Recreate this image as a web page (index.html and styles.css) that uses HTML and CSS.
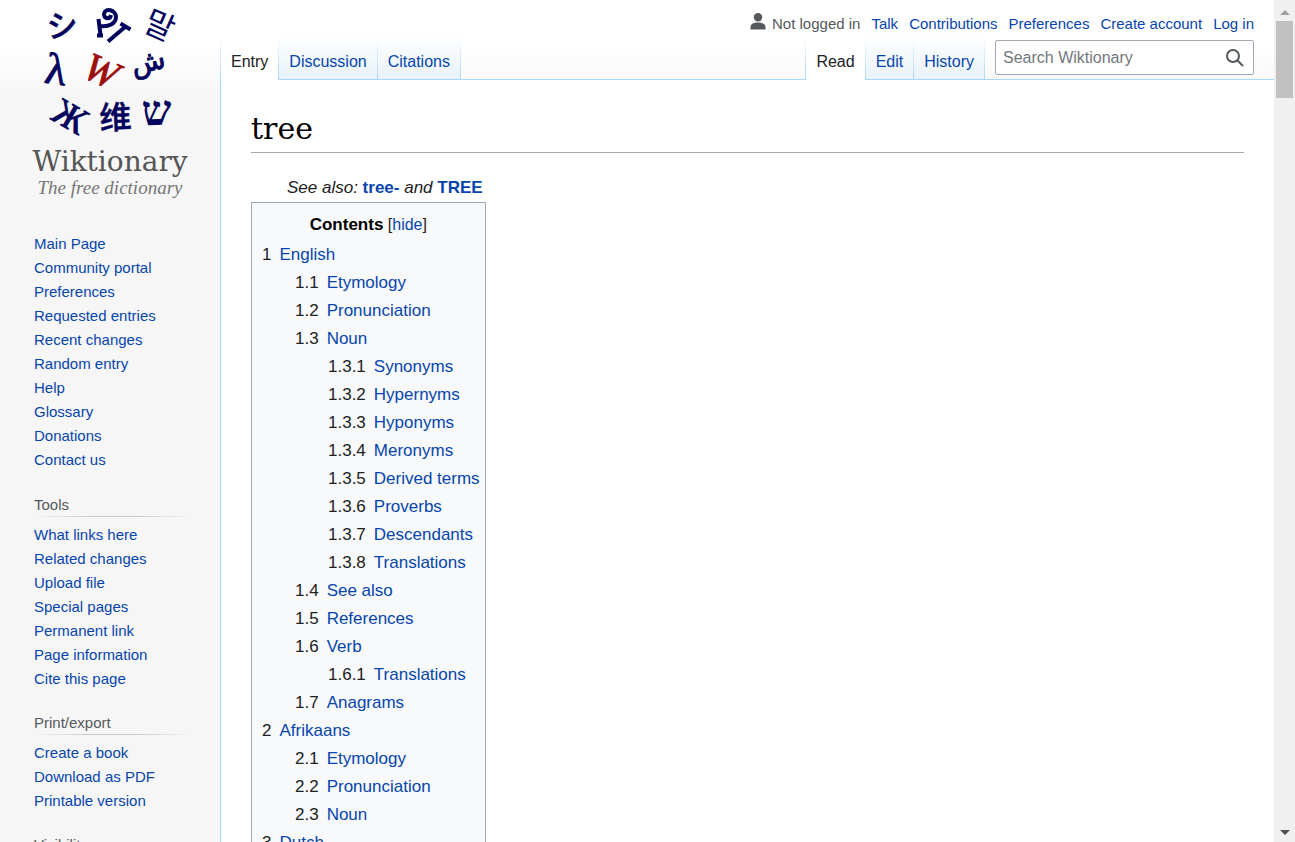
FILE: index.html
```html
<!DOCTYPE html>
<html lang="en">
<head>
<meta charset="utf-8">
<title>tree - Wiktionary</title>
<link rel="stylesheet" href="styles.css">
</head>
<body>
<div class="window">
  <div class="page">
    <aside class="sidebar">
      <a class="logo" href="#" aria-label="Wiktionary, the free dictionary">
        <svg class="logo-art" viewBox="0 0 220 144" aria-hidden="true">
          <g class="glyphs" text-anchor="middle">
            <text class="cjk medium" font-size="31" transform="translate(63 37) rotate(-4)">シ</text>
            <path class="brush" d="M98.500 19L100.500 35M97 35.500H103M100.500 26C108 27 116 24 116 17C116 10 105 7 104 14C104 19 110 20 111 15M108 41.500L125 27M120.500 23.500L130.500 29.500"/>
            <text class="cjk" font-size="32" transform="translate(155 36) rotate(24)">말</text>
            <text class="serif outlined" font-size="44" transform="translate(54 84) rotate(8)">λ</text>
            <text class="serif red" font-size="40" transform="translate(96 83) rotate(24)">W</text>
            <text class="sans outlined" font-size="28" transform="translate(150 71) rotate(-12)">ش</text>
            <text class="serif outlined" font-size="37" transform="translate(64 127) rotate(30)">Ж</text>
            <text class="cjk medium" font-size="32" transform="translate(116 129) rotate(-3)">维</text>
            <text class="serif bold" font-size="42" transform="translate(157 125) rotate(-2)">ש</text>
          </g>
        </svg>
        <span class="wordmark">Wiktionary</span>
        <span class="tagline">The free dictionary</span>
      </a>
      <nav class="portal main-links">
        <ul>
          <li><a href="#">Main Page</a></li>
          <li><a href="#">Community portal</a></li>
          <li><a href="#">Preferences</a></li>
          <li><a href="#">Requested entries</a></li>
          <li><a href="#">Recent changes</a></li>
          <li><a href="#">Random entry</a></li>
          <li><a href="#">Help</a></li>
          <li><a href="#">Glossary</a></li>
          <li><a href="#">Donations</a></li>
          <li><a href="#">Contact us</a></li>
        </ul>
      </nav>
      <nav class="portal" aria-labelledby="tools">
        <h3 id="tools">Tools</h3>
        <ul>
          <li><a href="#">What links here</a></li>
          <li><a href="#">Related changes</a></li>
          <li><a href="#">Upload file</a></li>
          <li><a href="#">Special pages</a></li>
          <li><a href="#">Permanent link</a></li>
          <li><a href="#">Page information</a></li>
          <li><a href="#">Cite this page</a></li>
        </ul>
      </nav>
      <nav class="portal" aria-labelledby="print">
        <h3 id="print">Print/export</h3>
        <ul>
          <li><a href="#">Create a book</a></li>
          <li><a href="#">Download as PDF</a></li>
          <li><a href="#">Printable version</a></li>
        </ul>
      </nav>
      <nav class="portal" aria-labelledby="visibility">
        <h3 id="visibility">Visibility</h3>
      </nav>
    </aside>

    <div class="main">
      <header class="header">
        <nav class="personal" aria-label="Personal tools">
          <span class="anon">
            <svg class="user-icon" viewBox="0 0 16 17" aria-hidden="true"><circle cx="8" cy="4.300" r="4.200"/><path d="M8 9.500C3 9.500 .5 11.500 .5 14V16.500H15.500V14C15.500 11.500 13 9.500 8 9.500Z"/></svg>
            Not logged in
          </span>
          <a href="#">Talk</a>
          <a href="#">Contributions</a>
          <a href="#">Preferences</a>
          <a href="#">Create account</a>
          <a href="#">Log in</a>
        </nav>
        <div class="bar">
          <nav class="tabs" aria-label="Namespaces">
            <a class="tab active" href="#">Entry</a>
            <a class="tab" href="#">Discussion</a>
            <a class="tab" href="#">Citations</a>
          </nav>
          <nav class="tabs views" aria-label="Views">
            <a class="tab active" href="#">Read</a>
            <a class="tab" href="#">Edit</a>
            <a class="tab" href="#">History</a>
          </nav>
          <form class="search">
            <input type="search" placeholder="Search Wiktionary" aria-label="Search Wiktionary">
            <button type="button" aria-label="Search">
              <svg viewBox="0 0 18 18" aria-hidden="true"><circle cx="7" cy="7" r="6"/><path d="M11 11L17 17"/></svg>
            </button>
          </form>
        </div>
      </header>

      <main class="content">
        <h1>tree</h1>
        <p class="see-also">See also: <a href="#">tree-</a> and <a href="#">TREE</a></p>
        <nav class="toc" aria-labelledby="contents">
          <div class="toc-title"><h2 id="contents">Contents</h2> [<a href="#">hide</a>]</div>
          <ul>
            <li><span>1</span><a href="#">English</a>
              <ul>
                <li><span>1.1</span><a href="#">Etymology</a></li>
                <li><span>1.2</span><a href="#">Pronunciation</a></li>
                <li><span>1.3</span><a href="#">Noun</a>
                  <ul>
                    <li><span>1.3.1</span><a href="#">Synonyms</a></li>
                    <li><span>1.3.2</span><a href="#">Hypernyms</a></li>
                    <li><span>1.3.3</span><a href="#">Hyponyms</a></li>
                    <li><span>1.3.4</span><a href="#">Meronyms</a></li>
                    <li><span>1.3.5</span><a href="#">Derived terms</a></li>
                    <li><span>1.3.6</span><a href="#">Proverbs</a></li>
                    <li><span>1.3.7</span><a href="#">Descendants</a></li>
                    <li><span>1.3.8</span><a href="#">Translations</a></li>
                  </ul>
                </li>
                <li><span>1.4</span><a href="#">See also</a></li>
                <li><span>1.5</span><a href="#">References</a></li>
                <li><span>1.6</span><a href="#">Verb</a>
                  <ul>
                    <li><span>1.6.1</span><a href="#">Translations</a></li>
                  </ul>
                </li>
                <li><span>1.7</span><a href="#">Anagrams</a></li>
              </ul>
            </li>
            <li><span>2</span><a href="#">Afrikaans</a>
              <ul>
                <li><span>2.1</span><a href="#">Etymology</a></li>
                <li><span>2.2</span><a href="#">Pronunciation</a></li>
                <li><span>2.3</span><a href="#">Noun</a></li>
              </ul>
            </li>
            <li><span>3</span><a href="#">Dutch</a></li>
          </ul>
        </nav>
      </main>
    </div>
  </div>
  <div class="scrollbar" aria-hidden="true">
    <span class="arrow up"></span>
    <span class="thumb"></span>
    <span class="arrow down"></span>
  </div>
</div>
</body>
</html>
```
FILE: styles.css
```css
* { box-sizing: border-box; }

body {
  margin: 0;
  font-family: "Liberation Sans", Arial, sans-serif;
  font-size: 17px;
  color: #202122;
  background: #f6f6f6;
  overflow: hidden;
}

a { color: #0645ad; text-decoration: none; }
ul { list-style: none; margin: 0; padding: 0; }
h1, h2, h3, p { margin: 0; font-weight: normal; }

.window { display: flex; height: 100vh; }

.page {
  flex: 1;
  min-width: 0;
  display: flex;
  overflow: hidden;
  background: #f6f6f6 linear-gradient(#fff 50%, #f6f6f6) top / 100% 96px no-repeat;
}

/* Sidebar */
.sidebar { width: 220px; flex: none; }

.logo {
  display: flex;
  flex-direction: column;
  align-items: center;
  height: 232px;
  white-space: nowrap;
}
.logo-art { display: block; width: 220px; height: 144px; flex: none; overflow: visible; }
.glyphs { fill: #04045c; }
.cjk { font-family: "Noto Sans CJK SC", "Noto Sans CJK KR", sans-serif; }
.medium { font-weight: 500; stroke: #04045c; stroke-width: 0.5; }
.serif { font-family: "Liberation Serif", serif; }
.bold { font-weight: bold; }
.sans { font-family: "DejaVu Sans", sans-serif; }
.outlined { stroke: #04045c; stroke-width: 0.9; }
.red { fill: #9c1010; stroke: #9c1010; stroke-width: 0.9; font-style: italic; }
.brush { fill: none; stroke: #04045c; stroke-width: 4; }
.wordmark {
  font-family: "DejaVu Serif", serif;
  font-size: 28px;
  line-height: 36px;
  color: #555;
}
.tagline {
  font-family: "Liberation Serif", serif;
  font-style: italic;
  font-size: 19px;
  line-height: 16px;
  color: #777;
}

.portal { margin: 0 28px 20px 34px; font-size: 15px; line-height: 24px; }
.portal h3 {
  font-size: 15px;
  color: #54595d;
  margin-bottom: 6px;
  background: linear-gradient(to right, rgba(200, 204, 209, 0), #c8ccd1 33%, #c8ccd1 66%, rgba(200, 204, 209, 0)) bottom / 100% 1px no-repeat;
}
.main-links { margin-bottom: 21px; }

/* Header */
.main { flex: 1; min-width: 0; display: flex; flex-direction: column; }

.header {
  flex: none;
  height: 80px;
  background: linear-gradient(#a7d7f9, #a7d7f9) bottom / 100% 1px no-repeat;
}

.personal {
  display: flex;
  justify-content: flex-end;
  align-items: center;
  gap: 11px;
  height: 35px;
  padding: 12px 20px 0 0;
  font-size: 15px;
  white-space: nowrap;
}
.anon { display: flex; align-items: center; gap: 6px; color: #54595d; }
.user-icon { width: 16px; height: 17px; fill: #54595d; margin-bottom: 4px; }

.bar { display: flex; height: 45px; padding-right: 20px; }

.tabs {
  display: flex;
  padding-left: 1px;
  background: linear-gradient(#fff, #a7d7f9) left / 1px 100% no-repeat;
}
.views { margin-left: auto; }
.tab {
  padding: 9px 11px 0 10px;
  font-size: 16px;
  line-height: 36px;
  background:
    linear-gradient(#fff, #a7d7f9) right / 1px 100% no-repeat,
    linear-gradient(#a7d7f9, #a7d7f9) bottom / 100% 1px no-repeat,
    linear-gradient(#fff, #e8f2f8);
}
.tab.active {
  color: #202122;
  background:
    linear-gradient(#fff, #a7d7f9) right / 1px 100% no-repeat,
    #fff;
}

.search {
  display: flex;
  width: 20vw;
  height: 35px;
  margin: 5px 0 0 10px;
  border: 1px solid #a2a9b1;
  border-radius: 2px;
  background: #fff;
}
.search input {
  flex: 1;
  min-width: 0;
  border: 0;
  padding: 0 7px;
  font: 16px "Liberation Sans", Arial, sans-serif;
  background: none;
}
.search input::placeholder { color: #72777d; opacity: 1; }
.search button {
  display: flex;
  align-items: center;
  justify-content: center;
  width: 36px;
  border: 0;
  padding: 0;
  background: none;
}
.search svg { width: 18px; height: 18px; fill: none; stroke: #54595d; stroke-width: 2; }

/* Article */
.content {
  flex: 1;
  min-height: 0;
  overflow: hidden;
  padding: 26px 30px 0;
  border-left: 1px solid #a7d7f9;
  background: #fff;
}
.content h1 {
  font-family: Georgia, "DejaVu Serif", serif;
  font-size: 30px;
  line-height: 46px;
  color: #000;
  border-bottom: 1px solid #a2a9b1;
}
.see-also {
  margin-top: 23px;
  padding-left: 36px;
  font-style: italic;
  line-height: 24px;
}
.see-also a { font-style: normal; font-weight: bold; }

.toc {
  width: max-content;
  margin-top: 2px;
  padding-top: 8px;
  border: 1px solid #a2a9b1;
  background: #f8f9fa;
  line-height: 28px;
}
.toc-title { text-align: center; font-size: 16px; }
.toc-title h2 { display: inline; font-size: 17px; font-weight: bold; color: #000; }
.toc > ul { margin-top: 2px; padding: 0 5px 8px 10px; }
.toc ul ul { padding-left: 33px; }
.toc span { margin-right: 8px; }

/* Window scrollbar */
.scrollbar {
  display: flex;
  flex-direction: column;
  align-items: center;
  flex: none;
  width: 21px;
  padding: 10px 0 7px;
  background: #f0f0f0;
}
.arrow { border: 5px solid transparent; }
.up { border-top: 0; border-bottom-color: #a0a0a0; }
.down { border-bottom: 0; border-top-color: #505050; margin-top: auto; }
.thumb { width: 17px; height: 77px; margin-top: 6px; background: #c1c1c1; }
```
